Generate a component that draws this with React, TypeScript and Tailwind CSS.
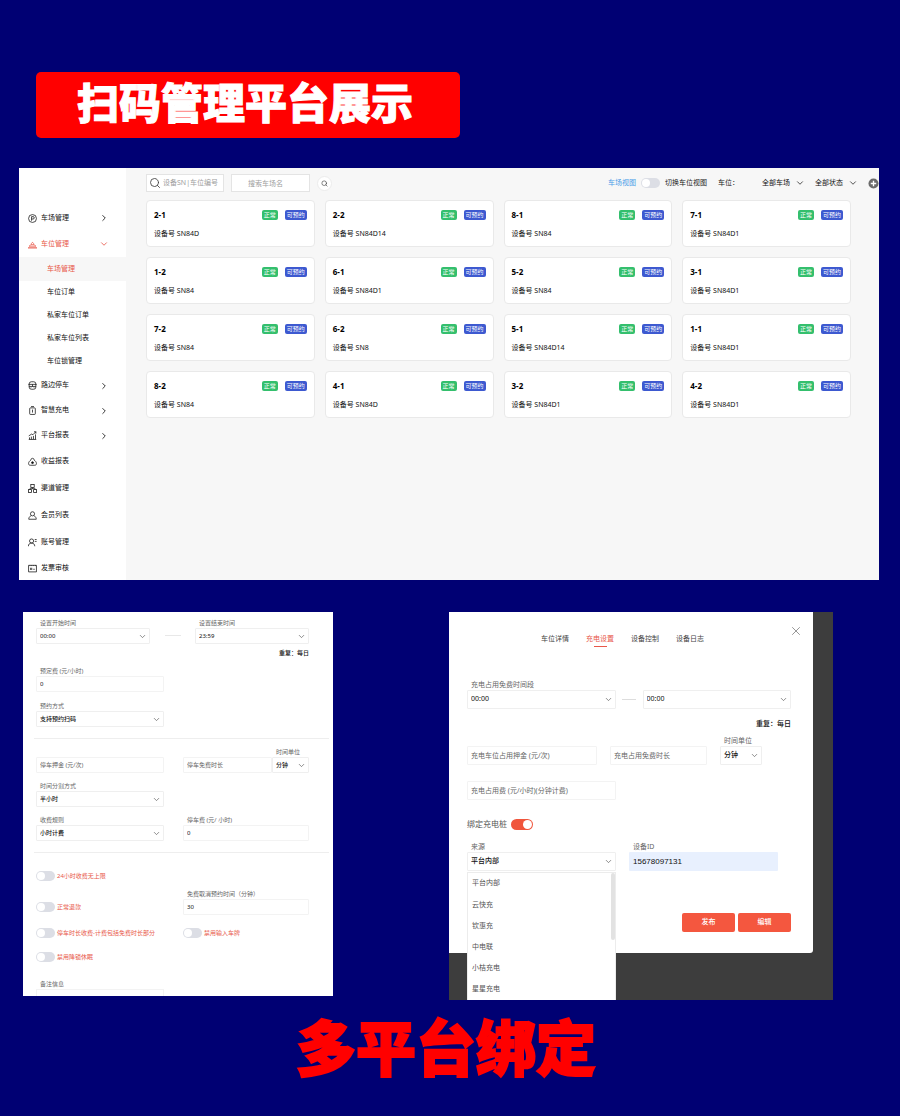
import { useState } from "react"
import type { ReactNode } from "react"
import { ChevronDown, ChevronRight, Search, X } from "lucide-react"

type Space = { name: string, serial: string }

const spaces: Space[] = [
    { name: '2-1', serial: 'SN84D' },
    { name: '2-2', serial: 'SN84D14' },
    { name: '8-1', serial: 'SN84' },
    { name: '7-1', serial: 'SN84D1' },
    { name: '1-2', serial: 'SN84' },
    { name: '6-1', serial: 'SN84D1' },
    { name: '5-2', serial: 'SN84' },
    { name: '3-1', serial: 'SN84D1' },
    { name: '7-2', serial: 'SN84' },
    { name: '6-2', serial: 'SN8' },
    { name: '5-1', serial: 'SN84D14' },
    { name: '1-1', serial: 'SN84D1' },
    { name: '8-2', serial: 'SN84' },
    { name: '4-1', serial: 'SN84D' },
    { name: '3-2', serial: 'SN84D1' },
    { name: '4-2', serial: 'SN84D1' },
]

const icons: Record<string, ReactNode> = {
    parking: <><circle cx="12" cy="12" r="10.5" /><path d="M9.5 18V7h4a3.2 3.2 0 0 1 0 6.400h-4" /></>,
    space: <><path d="M0 21h24" strokeWidth={3} /><path d="M3 16.500c2-1.500 4-2 5-4.500 1-2.500 2-5.500 4-5.500s3 3 4 5.500c1 2.500 3 3 5 4.500zM8 12.500h8" /></>,
    road: <><rect x="3" y="2" width="18" height="20" rx="6" /><path d="M1 9h22M3 14.500h18M12 9v5.500M7 18h2M15 18h2" /></>,
    charge: <><rect x="4.500" y="5" width="15" height="17.500" rx="2" /><path d="M8 1.500h8M12 9.500v8" /></>,
    report: <><path d="M2 22.500h20M4 22v-5M9 22v-7M14.500 22v-9M20 22V9M2 13l8-5 3 2 8-8M16 2h5v5" /></>,
    income: <><path d="M8 7.500a4 4 0 1 1 8 0c4 3 6.500 6.500 6.500 10 0 3-1.500 4.500-4.500 4.500H6c-3 0-4.500-1.500-4.500-4.500 0-3.500 2.500-7 6.500-10z" /><circle cx="12" cy="15" r="2.500" fill="currentColor" /></>,
    channel: <><rect x="7.500" y="1.500" width="9" height="8" /><rect x="1" y="15" width="8" height="7.500" /><rect x="15" y="15" width="8" height="7.500" /><path d="M12 9.500v3M5 15v-2.500h14V15" /></>,
    member: <><circle cx="12" cy="7.500" r="5.500" /><path d="M7.500 13C4 14.500 2 18 2 22h20c0-4-2-7.500-5.500-9" /></>,
    account: <><circle cx="9.500" cy="8" r="5.500" /><path d="M1 22c0-5 3-8.500 8.500-8.500S18 17 18 22M18 4h5M18 9h5" /></>,
    invoice: <><path d="M1.500 3.500h21v17.500h-21zM5 3.500v2M10 3.500v2M15 3.500v2M20 3.500v2" /><path d="M7 10v6M10 10v6M14 14h4" /></>,
}

function MenuIcon({ name }: { name: string }) {
    return (
        <svg viewBox="0 0 24 24" className="size-[9px] shrink-0" fill="none" stroke="currentColor" strokeWidth={2}>
            {icons[name]}
        </svg>
    )
}

const topMenu = [
    { icon: 'parking', title: '车场管理', open: false },
    { icon: 'space', title: '车位管理', open: true },
]

const subMenu = ['车场管理', '车位订单', '私家车位订单', '私家车位列表', '车位锁管理']

const midMenu = [
    { icon: 'road', title: '路边停车' },
    { icon: 'charge', title: '智慧充电' },
    { icon: 'report', title: '平台报表' },
]

const bottomMenu = [
    { icon: 'income', title: '收益报表' },
    { icon: 'channel', title: '渠道管理' },
    { icon: 'member', title: '会员列表' },
    { icon: 'account', title: '账号管理' },
    { icon: 'invoice', title: '发票审核' },
]

function Sidebar() {
    return (
        <nav className="w-[107px] shrink-0 bg-white pt-[37px] text-[7px] text-[#111]">
            {
                topMenu.map((item) => (
                    <a href="#" key={item.title} className={`flex h-[26px] items-center gap-1 pl-[9px] pr-[17px] ${item.open ? 'text-[#e8584a]' : ''}`}>
                        <MenuIcon name={item.icon} />
                        <span className="flex-1">{item.title}</span>
                        {item.open ? <ChevronDown className="size-[10px]" /> : <ChevronRight className="size-[10px]" />}
                    </a>
                ))
            }
            {
                subMenu.map((title, index) => (
                    <a href="#" key={title} className={`flex items-center pl-[28px] ${index === 0 ? 'h-[24px] bg-[#f7f7f7] text-[#e8584a]' : 'h-[23px]'}`}>
                        {title}
                    </a>
                ))
            }
            {
                midMenu.map((item) => (
                    <a href="#" key={item.title} className="flex h-[25px] items-center gap-1 pl-[9px] pr-[17px]">
                        <MenuIcon name={item.icon} />
                        <span className="flex-1">{item.title}</span>
                        <ChevronRight className="size-[10px]" />
                    </a>
                ))
            }
            {
                bottomMenu.map((item) => (
                    <a href="#" key={item.title} className="flex h-[27px] items-center gap-1 pl-[9px] last:h-[24px]">
                        <MenuIcon name={item.icon} />
                        <span>{item.title}</span>
                    </a>
                ))
            }
        </nav>
    )
}

function Toggle({ label, on = false, hideLabel = false }: { label: string, on?: boolean, hideLabel?: boolean }) {
    const [checked, setChecked] = useState(on)
    return (
        <label className="flex h-[10px] items-center gap-[2px] text-[6px] text-[#e8584a]">
            <input type="checkbox" role="switch" aria-label={label} checked={checked} onChange={() => setChecked(!checked)} className="peer sr-only" />
            <span className={`flex h-[10px] w-[19px] rounded-full p-px ${checked ? 'justify-end bg-[#f0553c]' : 'bg-[#dcdee5]'}`}>
                <span className="size-[8px] rounded-full bg-white" />
            </span>
            {!hideLabel && <span className="whitespace-nowrap">{label}</span>}
        </label>
    )
}

function Filter({ label }: { label: string }) {
    return (
        <div className="relative">
            <select aria-label={label} className="h-[18px] w-[42px] appearance-none text-[7px] text-[#111]">
                <option>{label}</option>
            </select>
            <ChevronDown className="pointer-events-none absolute -right-px top-[4px] size-[10px] text-[#333]" />
        </div>
    )
}

function Toolbar() {
    return (
        <div className="flex h-[18px] items-center pl-[20px]">
            <label className="flex h-[18px] w-[78px] items-center gap-[2px] border border-[#e4e4e4] bg-white px-[2px]">
                <Search className="size-[12px] shrink-0 text-[#444]" strokeWidth={1.75} />
                <input aria-label="设备SN|车位编号" placeholder="设备SN|车位编号" className="w-full min-w-0 text-[7px] outline-none placeholder:text-[#a0a0a0]" />
            </label>
            <input aria-label="搜索车场名" placeholder="搜索车场名" className="ml-[7px] h-[18px] w-[79px] border border-[#e4e4e4] bg-white pl-[16px] text-[7px] outline-none placeholder:text-[#a0a0a0]" />
            <button aria-label="搜索" className="ml-[7px] flex size-[15px] items-center justify-center rounded-full border border-[#ececec] bg-white">
                <Search className="size-[7px] text-[#333]" />
            </button>
            <div className="ml-auto flex items-center text-[7px] text-[#222]">
                <span className="mr-[5px] text-[#4a9de8]">车场视图</span>
                <Toggle label="切换车位视图" hideLabel />
                <span className="ml-[5px]">切换车位视图</span>
                <span className="ml-[11px] mr-[23px]">车位：</span>
                <Filter label="全部车场" />
                <span className="w-[11px]" />
                <Filter label="全部状态" />
                <button aria-label="新增" className="ml-[11px]">
                    <svg viewBox="0 0 24 24" className="size-[11px]">
                        <circle cx="12" cy="12" r="11" fill="#6b6b6b" />
                        <path d="M12 6v12M6 12h12" stroke="#fff" strokeWidth={3} />
                    </svg>
                </button>
            </div>
        </div>
    )
}

function SpaceCard({ space }: { space: Space }) {
    return (
        <article className="rounded-[4px] border border-[#e9e9e9] bg-white px-[7px] pb-[6px] pt-[8px]">
            <div className="flex h-[12px] items-center">
                <h3 className="flex-1 text-[8px] font-bold text-black">{space.name}</h3>
                <span className="flex h-[10px] w-[16px] items-center justify-center rounded-[2px] bg-[#34bf6d] text-[6px] text-white">正常</span>
                <span className="ml-[7px] flex h-[10px] w-[22px] items-center justify-center rounded-[2px] bg-[#3d59d0] text-[6px] text-white">可预约</span>
            </div>
            <p className="mt-[7px] whitespace-nowrap text-[7px] leading-[12px] text-[#111]">
                设备号 {space.serial}
            </p>
        </article>
    )
}

function Dashboard() {
    return (
        <section className="ml-[19px] mr-[21px] mt-[30px] flex bg-[#f7f7f7]">
            <Sidebar />
            <div className="min-w-0 flex-1 pt-[6px]">
                <Toolbar />
                <div className="ml-[20px] mr-[28px] mt-2 grid grid-cols-4 gap-[10px]">
                    {spaces.map((space) => <SpaceCard key={space.name} space={space} />)}
                </div>
            </div>
        </section>
    )
}

type FieldProps = { label: string, value?: string, select?: boolean, placeholder?: boolean, big?: boolean, bold?: boolean, hideLabel?: boolean }

function Field({ label, value = '', select = false, placeholder = false, big = false, bold = false, hideLabel = false }: FieldProps) {
    const box = big ? 'h-[19px] text-[7px]' : 'h-[16px] text-[6px]'
    return (
        <label className="block min-w-0">
            {!placeholder && !hideLabel && (
                <span className={`block whitespace-nowrap pl-1 text-[#666] ${big ? 'text-[7px] leading-[11px]' : 'text-[6px] leading-[10px]'}`}>{label}</span>
            )}
            {
                select ? (
                    <span className="relative block">
                        <select aria-label={label} className={`block w-full appearance-none rounded-[1px] border border-[#efefef] bg-white pl-[3px] text-[#111] ${box} ${bold ? 'font-medium' : ''}`}>
                            <option>{value}</option>
                        </select>
                        <ChevronDown className={`pointer-events-none absolute right-[3px] size-[9px] text-[#555] ${big ? 'top-[5px]' : 'top-[4px]'}`} strokeWidth={1.75} />
                    </span>
                ) : (
                    <input
                        defaultValue={value}
                        placeholder={placeholder ? label : ''}
                        aria-label={label}
                        className={`block w-full rounded-[1px] border border-[#f3f3f3] pl-[3px] text-[#111] outline-none placeholder:text-[#666] ${box}`}
                    />
                )
            }
        </label>
    )
}

function ParkingForm() {
    return (
        <form className="bg-white pl-[13px] pr-[24px] pt-[6px]">
            <div className="grid grid-cols-[1fr_45px_1fr] items-end">
                <Field label="设置开始时间" value="00:00" select />
                <span className="mx-auto mb-2 h-px w-4 bg-[#e8e8e8]" />
                <Field label="设置结束时间" value="23:59" select />
            </div>
            <p className="mt-1 text-right text-[6px] font-medium leading-[10px] text-[#111]">重复：每日</p>
            <div className="mt-2 grid grid-cols-[128fr_126fr] gap-x-[19px]">
                <Field label="预定费 (元/小时)" value="0" />
                <div />
                <div className="mt-[9px]">
                    <Field label="预约方式" value="支持预约扫码" select bold />
                </div>
            </div>
            <hr className="-ml-[2px] -mr-[20px] mt-[11px] border-[#eee]" />
            <div className="mt-2 grid grid-cols-[128fr_126fr] items-end gap-x-[19px] gap-y-2">
                <Field label="停车押金 (元/次)" placeholder />
                <div className="grid grid-cols-[89fr_37fr] items-end">
                    <Field label="停车免费时长" placeholder />
                    <Field label="时间单位" value="分钟" select bold />
                </div>
                <Field label="时间分割方式" value="半小时" select bold />
                <div />
                <Field label="收费规则" value="小时计费" select bold />
                <Field label="停车费 (元/ 小时)" value="0" />
            </div>
            <hr className="-ml-[2px] -mr-[20px] mt-[11px] border-[#eee]" />
            <div className="mt-[18px]">
                <Toggle label="24小时收费无上限" />
            </div>
            <div className="mt-2 grid grid-cols-[128fr_126fr] items-end gap-x-[19px]">
                <div className="mb-[3px]">
                    <Toggle label="正常退款" />
                </div>
                <Field label="免费取消预约时间（分钟）" value="30" />
            </div>
            <div className="mt-[13px] grid grid-cols-[128fr_126fr] gap-x-[19px] gap-y-[14px]">
                <Toggle label="停车时长收费-计费包括免费时长部分" />
                <Toggle label="禁用输入车牌" />
                <Toggle label="禁用降锁休眠" />
            </div>
            <label className="mt-[17px] block w-[128px] text-[6px] leading-[10px] text-[#666]">
                <span className="block pl-1">备注信息</span>
                <textarea rows={1} className="block h-[7px] w-full resize-none border border-b-0 border-[#f3f3f3]" />
            </label>
        </form>
    )
}

const tabs = ['车位详情', '充电设置', '设备控制', '设备日志']
const sources = ['平台内部', '云快充', '钦惠充', '中电联', '小桔充电', '星星充电']

function ChargeDialog() {
    return (
        <div className="bg-[#3d3d3d] pb-[47px] pr-[20px]">
            <form role="dialog" aria-label="充电设置" className="relative rounded-br-[3px] bg-white pb-[21px] pl-[18px] pr-[22px] pt-[20px]">
                <button type="button" aria-label="关闭" className="absolute right-[10px] top-[12px]">
                    <X className="size-[14px] text-[#888]" strokeWidth={1.5} />
                </button>
                <div role="tablist" className="ml-[74px] flex gap-[17px] text-[7px] leading-[13px] text-[#444]">
                    {
                        tabs.map((tab, index) => (
                            <button
                                type="button"
                                role="tab"
                                aria-selected={index === 1}
                                key={tab}
                                className={`flex h-[15px] flex-col items-center ${index === 1 ? 'text-[#e8584a]' : ''}`}
                            >
                                {tab}
                                {index === 1 && <span className="mt-px h-px w-[13px] shrink-0 bg-[#e8584a]" />}
                            </button>
                        ))
                    }
                </div>
                <div className="mt-8 grid grid-cols-[1fr_27px_1fr] items-end">
                    <Field label="充电占用免费时间段" value="00:00" select big />
                    <span className="mx-auto mb-[9px] h-px w-[14px] bg-[#ddd]" />
                    <Field label="结束时间" value="00:00" select big hideLabel />
                </div>
                <p className="mt-[9px] text-right text-[7px] font-medium leading-[12px] text-[#111]">重复：每日</p>
                <div className="mr-[29px] mt-[5px] grid grid-cols-[130fr_97fr_42fr] items-end gap-x-[13px]">
                    <Field label="充电车位占用押金 (元/次)" placeholder big />
                    <Field label="充电占用免费时长" placeholder big />
                    <Field label="时间单位" value="分钟" select big bold />
                </div>
                <div className="mt-4 grid grid-cols-[149fr_175fr]">
                    <Field label="充电占用费 (元/小时)(分钟计费)" placeholder big />
                </div>
                <div className="mt-[18px] flex h-[12px] items-center gap-1 text-[8px] text-[#555]">
                    <span>绑定充电桩</span>
                    <BindSwitch />
                </div>
                <div className="mr-[13px] mt-[11px] grid grid-cols-2 gap-x-[13px]">
                    <div className="relative">
                        <Field label="来源" value="平台内部" select big bold />
                        <ul role="listbox" aria-label="来源" className="absolute left-0 right-0 top-full z-10 mt-px flex h-[128px] flex-col border border-b-0 border-[#ececec] bg-white text-[7px] text-[#555]">
                            {
                                sources.map((source) => (
                                    <li role="option" aria-selected={false} key={source} className="flex flex-1 items-center pl-1">{source}</li>
                                ))
                            }
                            <li role="presentation" className="absolute right-0 top-0 h-[67px] w-[4px] rounded-full bg-[#e2e2e2]" />
                        </ul>
                    </div>
                    <label className="block">
                        <span className="block pl-1 text-[7px] leading-[11px] text-[#666]">设备ID</span>
                        <input defaultValue="15678097131" className="block h-[19px] w-full rounded-[1px] bg-[#e8f0fe] pl-1 font-['Liberation_Sans'] text-[8px] text-[#111] outline-none" />
                    </label>
                </div>
                <div className="mt-[42px] flex justify-end gap-[3px]">
                    <button type="button" className="h-[19px] w-[53px] rounded-[2px] bg-[#f4573f] text-[7px] font-medium text-white">发布</button>
                    <button type="button" className="h-[19px] w-[53px] rounded-[2px] bg-[#f4573f] text-[7px] font-medium text-white">编辑</button>
                </div>
            </form>
        </div>
    )
}

function BindSwitch() {
    const [bound, setBound] = useState(true)
    return (
        <label className="flex">
            <input type="checkbox" role="switch" aria-label="绑定充电桩" checked={bound} onChange={() => setBound(!bound)} className="sr-only" />
            <span className={`flex h-[11px] w-[22px] rounded-full p-px ${bound ? 'justify-end bg-[#f0553c]' : 'bg-[#dcdee5]'}`}>
                <span className="size-[9px] rounded-full bg-white" />
            </span>
        </label>
    )
}

export default function App() {
    return (
        <main lang="zh-CN" className="min-h-screen bg-[#000073] pb-[38px] pt-[72px] font-['Noto_Sans','Noto_Sans_CJK_SC',sans-serif]">
            <h1 className="ml-[36px] w-fit rounded-[5px] bg-[#ff0000] pb-1 pl-[41px] pr-[47px] text-[42px] font-black leading-[62px] text-white [-webkit-text-stroke:1px_white]">
                扫码管理平台展示
            </h1>
            <Dashboard />
            <div className="ml-[23px] mr-[67px] mt-[32px] grid grid-cols-[310fr_384fr] items-start gap-x-[116px]">
                <ParkingForm />
                <ChargeDialog />
            </div>
            <h2 className="mt-[18px] pr-2 text-center text-[60px] font-black leading-[60px] text-[#ff0000] [-webkit-text-stroke:2px_#ff0000]">
                多平台绑定
            </h2>
        </main>
    )
}
